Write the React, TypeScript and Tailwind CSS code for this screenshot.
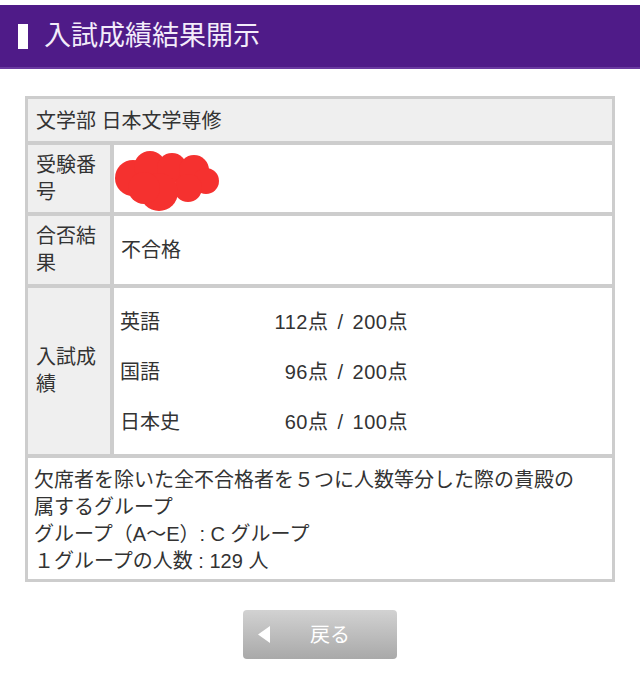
import React from 'react';

const scores = [
  { subject: '英語', score: '112点 / 200点' },
  { subject: '国語', score: '96点 / 200点' },
  { subject: '日本史', score: '60点 / 100点' },
];

const Blob = () => (
  <svg width="106" height="64" viewBox="0 0 106 64" className="block">
    <g fill="#f5312f">
      <circle cx="19" cy="30" r="18" />
      <circle cx="36" cy="19" r="16" />
      <circle cx="58" cy="20" r="15" />
      <circle cx="80" cy="22" r="15" />
      <circle cx="92" cy="33" r="13" />
      <circle cx="74" cy="40" r="14" />
      <circle cx="45" cy="44" r="19" />
      <circle cx="30" cy="40" r="16" />
    </g>
  </svg>
);

export default function App() {
  return (
    <div
      className="w-[640px] h-[696px] bg-white text-[#333] overflow-hidden"
      style={{ fontFamily: '"Liberation Sans", "Noto Sans CJK JP", sans-serif' }}
    >
      {/* Title bar */}
      <div className="mt-[5px] h-[64px] bg-[#4f1b88] border-b-2 border-[#6a3aa0] flex items-center pl-[18px]">
        <div className="w-[10px] h-[25px] bg-white" />
        <h1 className="ml-[16px] text-[27px] leading-none text-[#f3ecfa]">入試成績結果開示</h1>
      </div>

      {/* Result table */}
      <div className="mx-[25px] mt-[27px] bg-[#cdcdcd] p-[3px] flex flex-col gap-[4px] text-[20px] leading-[27px]">
        <div className="bg-[#efefef] h-[42px] flex items-center px-[8px] pt-[3px]">文学部 日本文学専修</div>

        <div className="flex gap-[4px] h-[67px]">
          <div className="w-[82px] shrink-0 bg-[#efefef] px-[8px] pt-[7px]">受験番号</div>
          <div className="flex-1 bg-white flex items-center pl-[0px] pt-[2px]">
            <Blob />
          </div>
        </div>

        <div className="flex gap-[4px] h-[68px]">
          <div className="w-[82px] shrink-0 bg-[#efefef] px-[8px] pt-[7px]">合否結果</div>
          <div className="flex-1 bg-white flex items-center px-[7px]">不合格</div>
        </div>

        <div className="flex gap-[4px] h-[166px]">
          <div className="w-[82px] shrink-0 bg-[#efefef] px-[8px] flex items-center">入試成績</div>
          <div className="flex-1 bg-white flex flex-col justify-center gap-[23px] px-[6px] pt-[2px]">
            {scores.map((s) => (
              <div key={s.subject} className="flex">
                <span className="w-[90px]">{s.subject}</span>
                <span className="w-[198px] text-right tracking-[0.5px] [word-spacing:3px]">{s.score}</span>
              </div>
            ))}
          </div>
        </div>

        <div className="bg-white h-[121px] px-[6px] pt-[9px]">
          <p>
            欠席者を除いた全不合格者を５つに人数等分した際の貴殿の
            <br />
            属するグループ
          </p>
          <p>グループ（A〜E）: C グループ</p>
          <p>１グループの人数 : 129 人</p>
        </div>
      </div>

      {/* Back button */}
      <div className="flex justify-center mt-[28px]">
        <button className="w-[154px] h-[49px] rounded-[4px] bg-gradient-to-b from-[#d2d2d2] to-[#a9a9a9] flex items-center text-white text-[20px]">
          <svg width="12" height="17" viewBox="0 0 12 17" className="ml-[15px]">
            <path d="M12 0 L0 8.5 L12 17 Z" fill="#fff" />
          </svg>
          <span className="ml-[40px]">戻る</span>
        </button>
      </div>
    </div>
  );
}
